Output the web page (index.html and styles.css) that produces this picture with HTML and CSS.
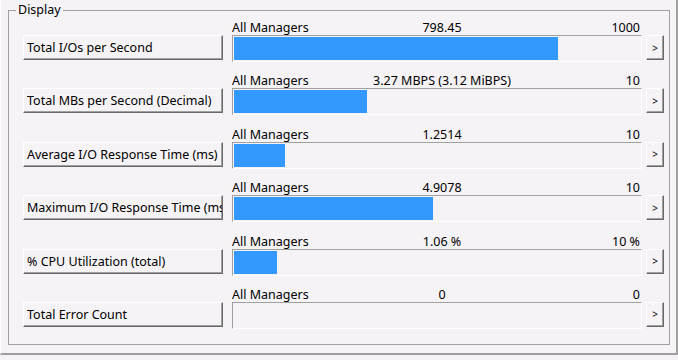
FILE: index.html
```html
<!DOCTYPE html>
<html lang="en">
<head>
    <meta charset="UTF-8">
    <title>Display</title>
    <link rel="stylesheet" href="styles.css">
</head>
<body>
<div class="window">
    <fieldset class="group">
        <legend>Display</legend>
        <div class="rows">
            <div class="row">
                <div class="head"><span>All Managers</span><span class="val">798.45</span><span class="max">1000</span></div>
                <div class="line">
                    <button class="metric">Total I/Os per Second</button>
                    <div class="bar"><div class="fill" style="width: 79.845%"></div></div>
                    <button class="more">&gt;</button>
                </div>
            </div>
            <div class="row">
                <div class="head"><span>All Managers</span><span class="val">3.27 MBPS (3.12 MiBPS)</span><span class="max">10</span></div>
                <div class="line">
                    <button class="metric">Total MBs per Second (Decimal)</button>
                    <div class="bar"><div class="fill" style="width: 32.7%"></div></div>
                    <button class="more">&gt;</button>
                </div>
            </div>
            <div class="row">
                <div class="head"><span>All Managers</span><span class="val">1.2514</span><span class="max">10</span></div>
                <div class="line">
                    <button class="metric">Average I/O Response Time (ms)</button>
                    <div class="bar"><div class="fill" style="width: 12.514%"></div></div>
                    <button class="more">&gt;</button>
                </div>
            </div>
            <div class="row">
                <div class="head"><span>All Managers</span><span class="val">4.9078</span><span class="max">10</span></div>
                <div class="line">
                    <button class="metric">Maximum I/O Response Time (ms)</button>
                    <div class="bar"><div class="fill" style="width: 49.078%"></div></div>
                    <button class="more">&gt;</button>
                </div>
            </div>
            <div class="row">
                <div class="head"><span>All Managers</span><span class="val">1.06 %</span><span class="max">10 %</span></div>
                <div class="line">
                    <button class="metric">% CPU Utilization (total)</button>
                    <div class="bar"><div class="fill" style="width: 10.6%"></div></div>
                    <button class="more">&gt;</button>
                </div>
            </div>
            <div class="row">
                <div class="head"><span>All Managers</span><span class="val">0</span><span class="max">0</span></div>
                <div class="line">
                    <button class="metric">Total Error Count</button>
                    <div class="bar"><div class="fill" style="width: 0%"></div></div>
                    <button class="more">&gt;</button>
                </div>
            </div>
        </div>
    </fieldset>
</div>
</body>
</html>
```

FILE: styles.css
```css
*{
    margin: 0;
    padding: 0;
    box-sizing: border-box;
}
body{
    background: #f6f3f6;
    font-family: "Noto Sans", "Liberation Sans", sans-serif;
    font-size: 12.5px;
    color: #000;
}
.window{
    width: 678px;
    height: 355px;
    padding-top: 2px;
    border-left: 1px solid #fff;
    border-right: 2px solid #a0a0a0;
    border-bottom: 2px solid #a0a0a0;
}
.group{
    margin-left: 7px;
    width: 662px;
    border: 1px solid #a0a0a0;
    padding: 2px 0 15px 14px;
}
.group legend{
    margin-left: -7px;
    padding: 0 2px;
    line-height: 16px;
}
.rows{
    display: flex;
    flex-direction: column;
    gap: 11.4px;
}
.head{
    display: grid;
    grid-template-columns: 1fr auto 1fr;
    width: 420px;
    margin-left: 209px;
    line-height: 15px;
    white-space: nowrap;
}
.head .max{
    text-align: right;
    padding-right: 12px;
}
.line{
    display: flex;
    align-items: flex-start;
}
button{
    font-family: inherit;
    font-size: 12.5px;
    color: #000;
    background: #f6f3f6;
    border: 1px solid;
    border-color: #fff #696969 #696969 #fff;
    box-shadow: inset -1px -1px 0 #a0a0a0;
}
.metric{
    width: 200px;
    height: 25px;
    margin-right: 9px;
    padding-left: 3px;
    text-align: left;
    line-height: 23px;
    white-space: nowrap;
    overflow: hidden;
}
.bar{
    width: 410px;
    height: 27px;
    padding: 1px;
    border: 1px solid;
    border-color: #a0a0a0 #fff #fff #a0a0a0;
}
.fill{
    height: 100%;
    background: #3399ff;
}
.more{
    width: 18px;
    height: 25px;
    margin-left: 4px;
    font-size: 10px;
    line-height: 20px;
}
```
